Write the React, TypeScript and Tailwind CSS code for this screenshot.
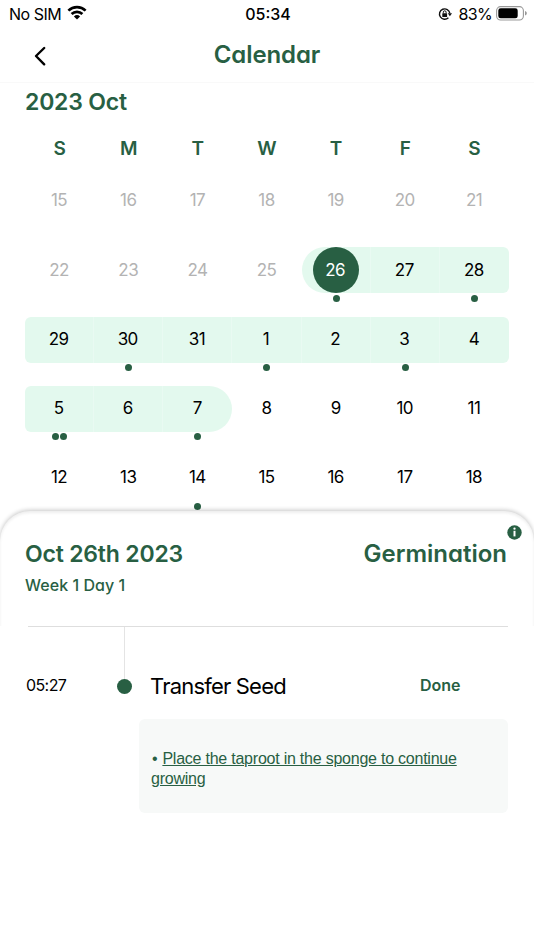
interface Day {
  label: string;
  muted?: boolean;
  dots?: number;
  range?: string;
  selected?: boolean;
}

const weekdays = ['S', 'M', 'T', 'W', 'T', 'F', 'S'];

const middle = 'border-r border-[#e9faf2]';

const weeks: Day[][] = [
  ['15', '16', '17', '18', '19', '20', '21'].map(label => ({ label, muted: true })),
  [
    { label: '22', muted: true },
    { label: '23', muted: true },
    { label: '24', muted: true },
    { label: '25', muted: true },
    { label: '26', selected: true, dots: 1, range: 'rounded-l-full border-r border-[#e9faf2]' },
    { label: '27', range: middle },
    { label: '28', dots: 1, range: 'rounded-r-[6px]' },
  ],
  [
    { label: '29', range: 'rounded-l-[6px] border-r border-[#e9faf2]' },
    { label: '30', dots: 1, range: middle },
    { label: '31', range: middle },
    { label: '1', dots: 1, range: middle },
    { label: '2', range: middle },
    { label: '3', dots: 1, range: middle },
    { label: '4', range: 'rounded-r-[6px]' },
  ],
  [
    { label: '5', dots: 2, range: 'rounded-l-[6px] border-r border-[#e9faf2]' },
    { label: '6', range: middle },
    { label: '7', dots: 1, range: 'rounded-r-full' },
    { label: '8' },
    { label: '9' },
    { label: '10' },
    { label: '11' },
  ],
  [
    { label: '12' },
    { label: '13' },
    { label: '14', dots: 1 },
    { label: '15' },
    { label: '16' },
    { label: '17' },
    { label: '18' },
  ],
];

function StatusBar() {
  return (
    <div className="grid h-[27px] grid-cols-3 items-center pl-[9px] pr-[7px] text-black">
      <div className="flex items-center gap-[6px]">
        <span className="text-[16px] leading-none tracking-[-0.5px]">No SIM</span>
        <svg className="-mt-[2px]" width="20" height="15" viewBox="0 0 20 15" fill="none" stroke="#000" strokeWidth="2.7">
          <path d="M1.4 5.6a12.4 12.4 0 0 1 17.2 0" />
          <path d="M4.6 9a7.8 7.8 0 0 1 10.8 0" />
          <path d="M10 14.6 6.9 11.4a4.5 4.5 0 0 1 6.2 0z" fill="#000" stroke="none" />
        </svg>
      </div>
      <div className="text-center text-[16px] font-medium leading-none">05:34</div>
      <div className="flex items-center justify-end">
        <svg width="14" height="14" viewBox="0 0 14 14" fill="none">
          <path d="M11.8 6.2A5.2 5.2 0 1 0 10.4 10.7" stroke="#111" strokeWidth="1.4" />
          <path d="M9.8 6.2H14l-2.1 3z" fill="#111" />
          <rect x="4.3" y="6.2" width="4.8" height="3.8" rx="0.6" fill="#111" />
          <path d="M5.3 6.4V5.2a1.4 1.4 0 0 1 2.8 0v1.2" stroke="#111" strokeWidth="1" />
        </svg>
        <span className="ml-[7px] text-[16px] leading-none tracking-[-0.7px]">83%</span>
        <svg className="ml-[4px] -mt-px" width="31" height="15" viewBox="0 0 31 15">
          <rect x="0.6" y="0.6" width="26.8" height="13.4" rx="4" fill="none" stroke="#999" strokeWidth="1.1" />
          <rect x="2.3" y="2.3" width="19.4" height="10" rx="2.4" fill="#000" />
          <path d="M29 5v4.6c1.4-.6 1.8-1.3 1.8-2.3S30.4 5.6 29 5z" fill="#999" />
        </svg>
      </div>
    </div>
  );
}

function DayCell({ day }: { day: Day }) {
  const color = day.selected ? 'text-white' : day.muted ? 'text-[#b3b3b3]' : 'text-black';
  return (
    <div className="flex h-[69.3px] flex-col items-center">
      <div
        className={`flex h-[46px] w-full items-center justify-center ${day.range ? `bg-[#e3f9ee] ${day.range}` : ''}`}
      >
        <div
          className={`flex size-[46px] items-center justify-center rounded-full pr-px text-[17px] tracking-[-0.6px] ${color} ${day.selected ? 'bg-[#285f43]' : ''}`}
        >
          {day.label}
        </div>
      </div>
      <div className="mt-[1.5px] flex gap-[1.5px]">
        {Array.from({ length: day.dots ?? 0 }, (_, i) => (
          <span key={i} className="size-[7px] rounded-full bg-[#285f43]" />
        ))}
      </div>
    </div>
  );
}

export default function App() {
  return (
    <div className="h-[950px] w-[534px] overflow-hidden bg-white font-['Inter',sans-serif] text-[#285f43] [font-feature-settings:'cv11']">
      <StatusBar />

      <header className="grid h-[56px] grid-cols-3 items-center border-b border-[#f9f9f9]">
        <button className="ml-[34px] mt-[3px] w-fit">
          <svg width="12" height="20" viewBox="0 0 12 20" fill="none" stroke="#000" strokeWidth="2.4" strokeLinecap="round" strokeLinejoin="round">
            <path d="M10.2 2 2 10l8.2 8.3" />
          </svg>
        </button>
        <h1 className="text-center text-[24px] font-semibold leading-none tracking-[-0.1px]">Calendar</h1>
      </header>

      <section className="h-[428px] px-[25px] pt-[7px]">
        <h2 className="text-[23px] font-semibold leading-6 tracking-[-0.2px]">2023 Oct</h2>
        <div className="mt-[21px] grid h-[24px] grid-cols-7 items-center text-center text-[19px] font-semibold">
          {weekdays.map((name, i) => (
            <span key={i}>{name}</span>
          ))}
        </div>
        <div className="mt-[19px]">
          {weeks.map((week, i) => (
            <div key={i} className="grid grid-cols-7">
              {week.map(day => (
                <DayCell key={day.label} day={day} />
              ))}
            </div>
          ))}
        </div>
      </section>

      <section className="relative flex h-[116px] justify-between rounded-t-[30px] bg-white pl-[25px] pr-[27px] pt-[29px] shadow-[0_-1px_4px_rgba(0,0,0,0.22),inset_0_2px_3px_rgba(0,0,0,0.07)]">
        <div>
          <h2 className="text-[23px] font-semibold leading-7 tracking-[-0.2px]">Oct 26th 2023</h2>
          <p className="mt-[7px] text-[16px] font-medium leading-5 tracking-[0.05px]">Week 1 Day 1</p>
        </div>
        <h2 className="text-[24px] font-semibold leading-7">Germination</h2>
        <svg className="absolute right-[12px] top-[14px]" width="15" height="15" viewBox="0 0 15 15">
          <circle cx="7.5" cy="7.5" r="7.2" fill="#285f43" />
          <path d="M6.5 5.8h2v5.6h-2z" fill="#fff" />
          <circle cx="7.5" cy="3.7" r="1.15" fill="#fff" />
        </svg>
      </section>

      <section className="relative h-[323px] bg-white px-[26px]">
        <div className="-mt-px ml-[2px] h-px bg-[#dedede]" />
        <div className="flex">
          <time className="mt-[46px] w-[91px] text-[16px] leading-6 tracking-[-0.6px] text-black">05:27</time>
          <div className="flex w-[15px] flex-col items-center">
            <div className="h-[52px] w-[1.5px] bg-[#e4e4e4]" />
            <div className="size-[15px] rounded-full bg-[#285f43]" />
          </div>
          <h3 className="ml-[18px] mt-[45px] w-[270px] text-[22px] leading-7 tracking-[-0.8px] text-black [font-feature-settings:normal]">
            Transfer Seed
          </h3>
          <button className="mt-[46px] h-6 text-[16px] font-semibold leading-6">Done</button>
        </div>
        <div className="ml-[113px] mt-[19px] h-[94px] rounded-[6px] bg-[#f7f9f8] pl-[12px] pt-[30px] font-['Liberation_Sans',sans-serif] text-[16px] leading-[19.5px] tracking-[-0.23px]">
          <span className="mr-[5px] pl-px">•</span>
          <span className="underline">Place the taproot in the sponge to continue</span>
          <br />
          <span className="underline">growing</span>
        </div>
      </section>
    </div>
  );
}
